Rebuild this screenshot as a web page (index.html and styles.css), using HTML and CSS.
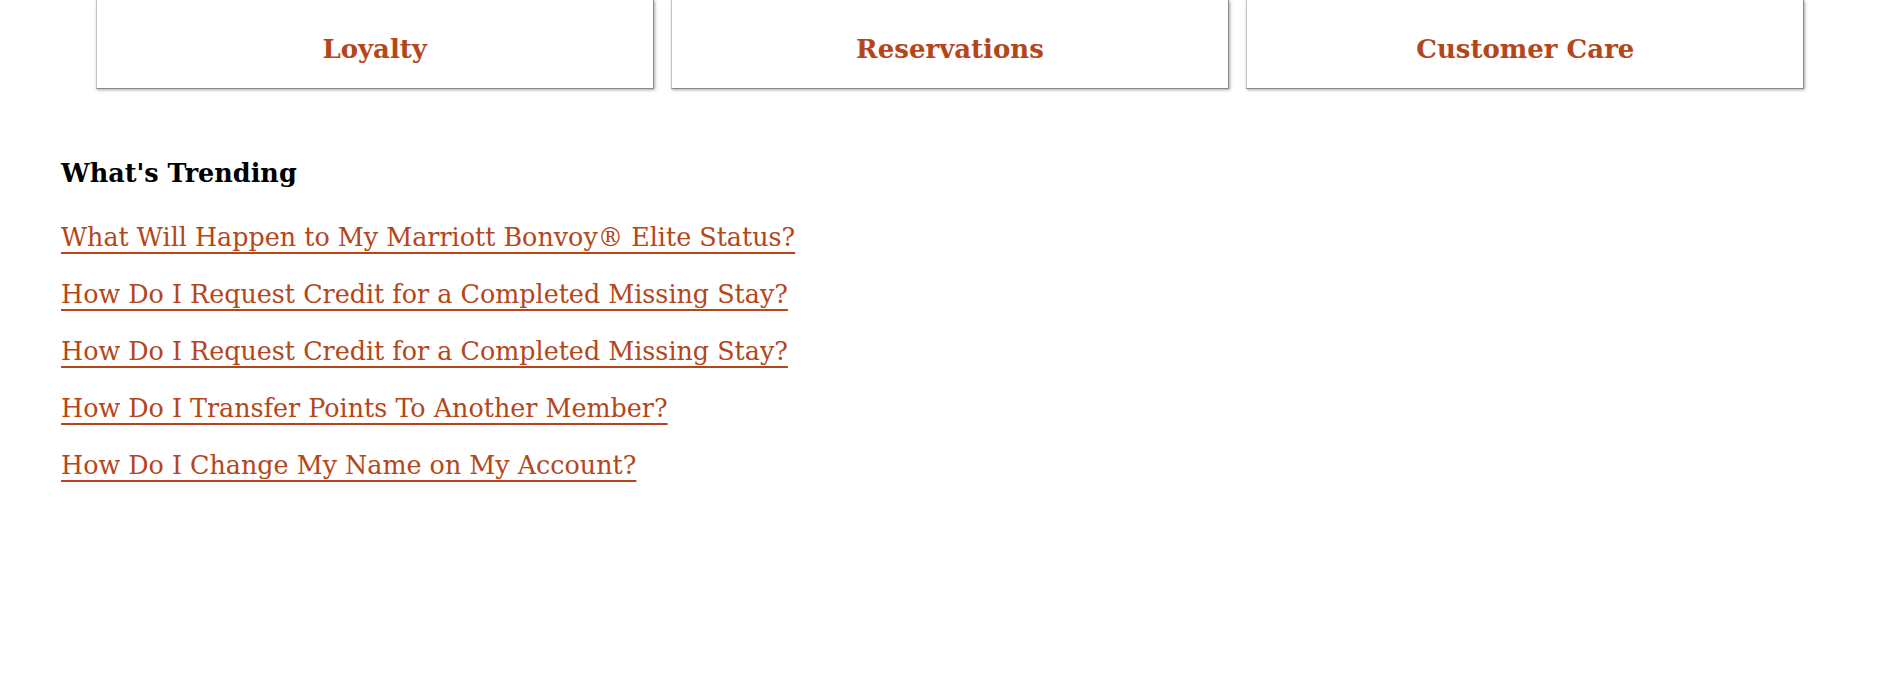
FILE: index.html
```html
<!DOCTYPE html>
<html lang="en">
<head>
<meta charset="utf-8">
<title>Help Center</title>
<link rel="stylesheet" href="styles.css">
</head>
<body>
<div class="cards">
  <a class="card" href="#">Loyalty</a>
  <a class="card" href="#">Reservations</a>
  <a class="card" href="#">Customer Care</a>
</div>
<section class="trending">
  <h2 class="trending-title">What's Trending</h2>
  <ul class="trending-list">
    <li><a class="trending-link" href="#">What Will Happen to My Marriott Bonvoy® Elite Status?</a></li>
    <li><a class="trending-link" href="#">How Do I Request Credit for a Completed Missing Stay?</a></li>
    <li><a class="trending-link" href="#">How Do I Request Credit for a Completed Missing Stay?</a></li>
    <li><a class="trending-link" href="#">How Do I Transfer Points To Another Member?</a></li>
    <li><a class="trending-link" href="#">How Do I Change My Name on My Account?</a></li>
  </ul>
</section>
</body>
</html>
```
FILE: styles.css
```css
html, body {
  margin: 0;
  padding: 0;
  background: #ffffff;
}
body {
  font-family: "DejaVu Serif", "Liberation Serif", serif;
  color: #000;
}
.cards {
  width: 1709px;
  margin: 0 auto;
  display: grid;
  grid-template-columns: repeat(3, 1fr);
  gap: 17px;
}
.card {
  box-sizing: border-box;
  height: 89px;
  padding-top: 34px;
  border: 1px solid #c4c4c4;
  border-top: 0;
  border-bottom-color: #8a8a8a;
  border-right-color: #8a8a8a;
  box-shadow: 1px 1px 3px rgba(0, 0, 0, 0.35);
  text-align: center;
  font-size: 26px;
  line-height: 30px;
  font-weight: bold;
  color: #b5461a;
  text-decoration: none;
  background: #fff;
}
.trending {
  padding: 69px 0 0 61px;
}
.trending-title {
  margin: 0;
  font-size: 25.5px;
  line-height: 30px;
  font-weight: bold;
}
.trending-list {
  list-style: none;
  margin: 21px 0 0;
  padding: 0;
  font-size: 25.4px;
}
.trending-list li {
  line-height: 57px;
}
.trending-link {
  color: #b5461a;
  text-decoration: underline;
  text-decoration-thickness: 2px;
  text-underline-offset: 6px;
}
```
